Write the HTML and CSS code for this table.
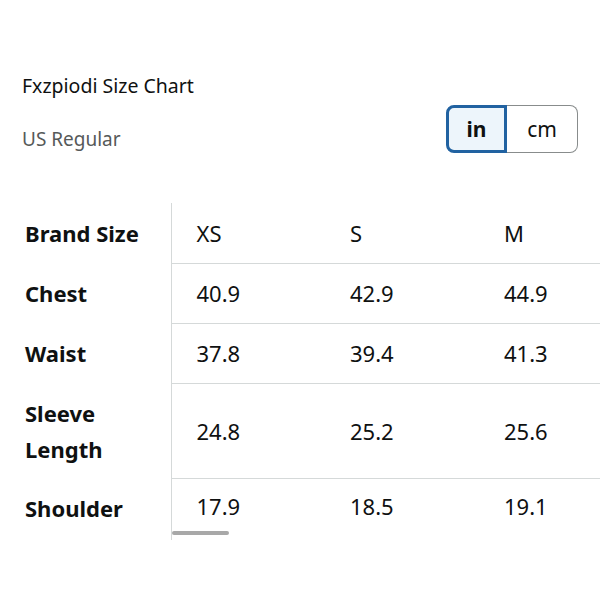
FILE: index.html
```html
<!DOCTYPE html>
<html>
<head>
<meta charset="utf-8">
<link rel="stylesheet" href="styles.css">
</head>
<body>
<div class="page">
  <div class="head">
    <div class="titles">
      <div class="title">Fxzpiodi Size Chart</div>
      <div class="sub">US Regular</div>
    </div>
    <div class="toggle">
      <div class="opt active">in</div>
      <div class="opt">cm</div>
    </div>
  </div>
  <div class="chart">
    <table class="grid">
      <colgroup><col class="c0"><col class="cv"><col class="cv"><col class="cv"></colgroup>
      <tr class="r60"><th>Brand Size</th><td>XS</td><td>S</td><td>M</td></tr>
      <tr class="r60"><th>Chest</th><td>40.9</td><td>42.9</td><td>44.9</td></tr>
      <tr class="r60"><th>Waist</th><td>37.8</td><td>39.4</td><td>41.3</td></tr>
      <tr class="r95"><th>Sleeve<br>Length</th><td>24.8</td><td>25.2</td><td>25.6</td></tr>
      <tr class="rlast"><th>Shoulder</th><td>17.9</td><td>18.5</td><td>19.1</td></tr>
    </table>
    <div class="thumb"></div>
  </div>
</div>
</body>
</html>
```
FILE: styles.css
```css
html, body { margin: 0; padding: 0; background: #fff; }
body { font-family: "Noto Sans", "Open Sans", sans-serif; color: #0f1111; width: 600px; height: 600px; overflow: hidden; }
.page { padding-top: 73px; }
.head { display: flex; justify-content: space-between; padding: 0 22px 0 22px; }
.title { font-size: 19.5px; line-height: 26px; color: #0f1111; }
.sub { font-size: 19px; line-height: 26px; color: #565959; margin-top: 27px; }
.toggle { display: flex; margin-top: 32px; height: 48px; }
.opt { box-sizing: border-box; height: 48px; display: flex; align-items: center; justify-content: center; font-size: 21px; }
.opt.active { width: 61px; border: 3px solid #2162a1; border-radius: 8px 0 0 8px; background: #edf5fb; font-weight: 700; }
.opt:not(.active) { width: 71px; border: 1px solid #888c8c; border-left: none; border-radius: 0 8px 8px 0; }
.chart { position: relative; margin-top: 50px; overflow: hidden; width: 600px; }
.grid { border-collapse: collapse; font-size: 22px; table-layout: fixed; width: 633px; }
.c0 { width: 171px; }
.cv { width: 154px; }
.grid th { padding: 0 0 0 25px; text-align: left; font-weight: 700; border-right: 1px solid #d5d9d9; line-height: 36px; white-space: nowrap; }
.grid td { padding: 0 0 0 25px; border-bottom: 1px solid #d5d9d9; white-space: nowrap; }
.grid tr:last-child td { border-bottom: none; }
.r60 { height: 60px; }
.r95 { height: 95px; }
.rlast { height: 62px; }
.rlast th, .rlast td { vertical-align: top; padding-top: 12px; }
.thumb { position: absolute; left: 172px; top: 328px; width: 57px; height: 4px; border-radius: 2px; background: #a8a8a8; }
```
